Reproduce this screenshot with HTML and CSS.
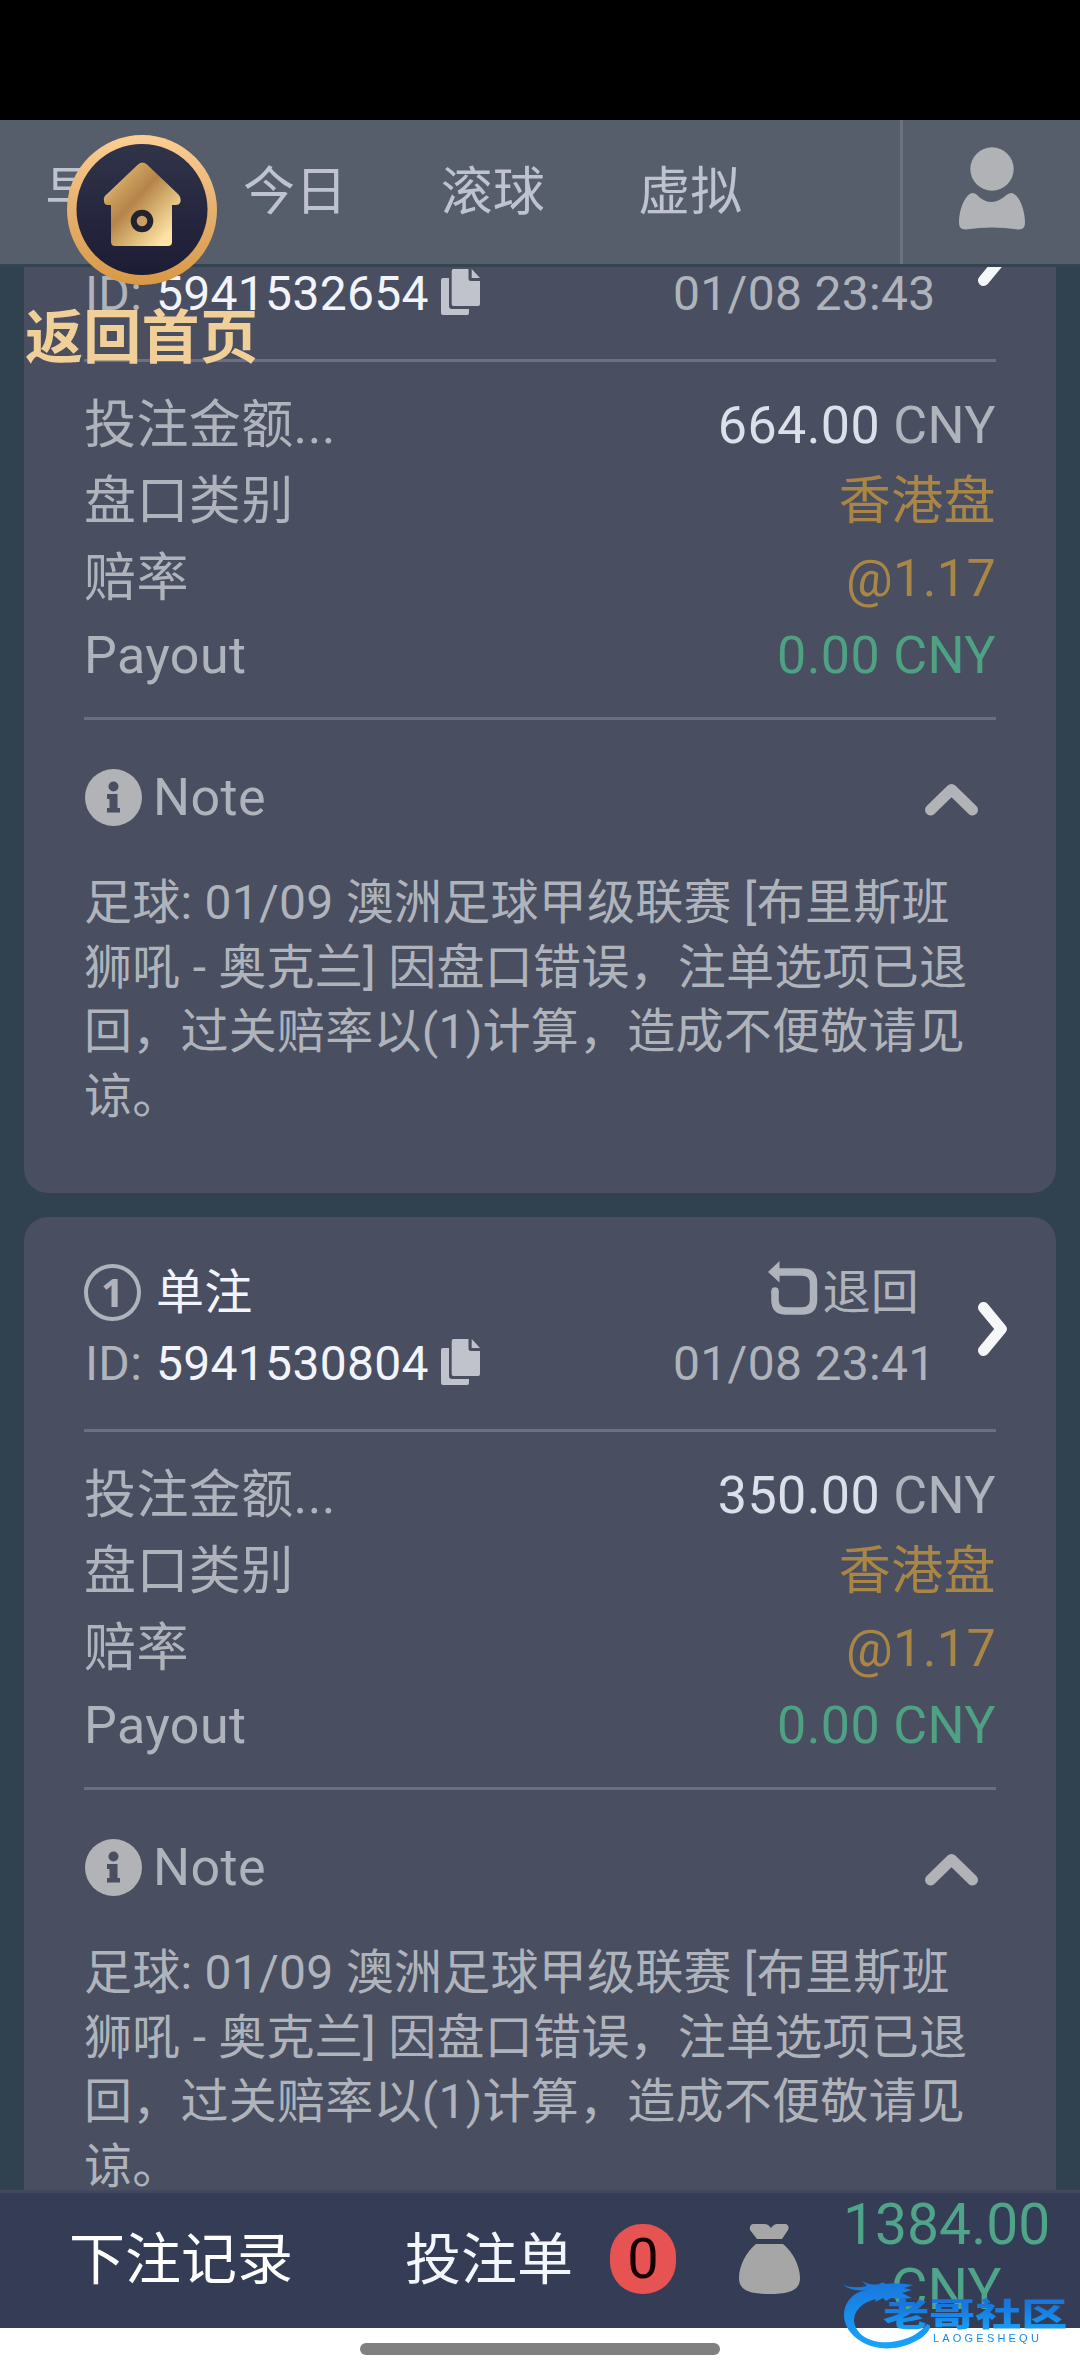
FILE: index.html
```html
<!DOCTYPE html>
<html lang="zh-CN">
<head>
<meta charset="utf-8">
<title>下注记录</title>
<link rel="stylesheet" href="styles.css">
</head>
<body>
<svg class="defs" aria-hidden="true">
  <symbol id="copy" viewBox="0 0 39 46">
    <path d="M2 9H8V37Q8 40 11 40H28V44Q28 46 26 46H2Q0 46 0 44V11Q0 9 2 9Z"/>
    <path d="M12.500 0H27.500V9.500Q27.500 12 30 12H39V35Q39 37 37 37H12.500Q10.700 37 10.700 35V2Q10.700 0 12.500 0Z"/>
    <path d="M30.700 0L39 9H30.700Z"/>
  </symbol>
  <symbol id="info" viewBox="0 0 57 57">
    <circle cx="28.500" cy="28.500" r="28.500"/>
    <g class="cut"><circle cx="28.500" cy="17.500" r="5"/><path d="M22 25H32.500V39H35V43.500H22V39H24.500V30H22Z"/></g>
  </symbol>
  <symbol id="up" viewBox="0 0 53 32"><path class="line" d="M5.500 26L26.500 5.500L47.500 26"/></symbol>
  <symbol id="next" viewBox="0 0 29 54"><path class="line" d="M5.500 5.500L23.300 27L5.500 48.500"/></symbol>
  <symbol id="refund" viewBox="0 0 50 54">
    <path d="M0 11L11.500 0V21.500Z"/>
    <path class="stroke" d="M10 11H34Q45.500 11 45.500 22V39Q45.500 50 34 50H18Q7 50 7 39V30"/>
    <circle cx="7" cy="30" r="3.700"/>
  </symbol>
</svg>
<div class="screen">
  <div class="statusbar"></div>
  <header class="topbar">
    <nav class="tabs"><span>早盘</span><span>今日</span><span>滚球</span><span>虚拟</span></nav>
    <div class="profile">
      <svg width="66" height="84" viewBox="0 0 66 84"><circle cx="33" cy="22" r="21.700"/><path d="M13 46Q17 46 20 50Q32 60 45 50Q49 46 53 46C60 48 66 62 66 76Q66 83 59 82.500Q33 78.500 7 82.500Q0 83 0 76C0 62 6 48 13 46Z"/></svg>
    </div>
  </header>

  <main class="list">
    <article class="card first">
      <div class="head">
        <div class="head-left">
          <div class="line-row"><span class="num">1</span><b>单注</b></div>
          <div class="line-row"><span class="id">ID:</span><b>5941532654</b><svg class="copy"><use href="#copy"/></svg></div>
        </div>
        <div class="head-right">
          <div class="line-row status"><svg class="refund"><use href="#refund"/></svg>退回</div>
          <div class="line-row">01/08 23:43</div>
        </div>
        <svg class="next"><use href="#next"/></svg>
      </div>
      <dl class="rows">
        <div><dt>投注金额...</dt><dd><em>664.00</em> CNY</dd></div>
        <div><dt>盘口类别</dt><dd class="gold">香港盘</dd></div>
        <div><dt>赔率</dt><dd class="gold">@1.17</dd></div>
        <div><dt>Payout</dt><dd class="green">0.00 CNY</dd></div>
      </dl>
      <div class="note-head"><svg class="info"><use href="#info"/></svg><span>Note</span><svg class="up"><use href="#up"/></svg></div>
      <p class="note">足球: 01/09 澳洲足球甲级联赛 [布里斯班<br>狮吼 - 奥克兰] 因盘口错误，注单选项已退<br>回，过关赔率以(1)计算，造成不便敬请见<br>谅。</p>
    </article>

    <article class="card">
      <div class="head">
        <div class="head-left">
          <div class="line-row"><span class="num">1</span><b>单注</b></div>
          <div class="line-row"><span class="id">ID:</span><b>5941530804</b><svg class="copy"><use href="#copy"/></svg></div>
        </div>
        <div class="head-right">
          <div class="line-row status"><svg class="refund"><use href="#refund"/></svg>退回</div>
          <div class="line-row">01/08 23:41</div>
        </div>
        <svg class="next"><use href="#next"/></svg>
      </div>
      <dl class="rows">
        <div><dt>投注金额...</dt><dd><em>350.00</em> CNY</dd></div>
        <div><dt>盘口类别</dt><dd class="gold">香港盘</dd></div>
        <div><dt>赔率</dt><dd class="gold">@1.17</dd></div>
        <div><dt>Payout</dt><dd class="green">0.00 CNY</dd></div>
      </dl>
      <div class="note-head"><svg class="info"><use href="#info"/></svg><span>Note</span><svg class="up"><use href="#up"/></svg></div>
      <p class="note">足球: 01/09 澳洲足球甲级联赛 [布里斯班<br>狮吼 - 奥克兰] 因盘口错误，注单选项已退<br>回，过关赔率以(1)计算，造成不便敬请见<br>谅。</p>
    </article>
  </main>

  <footer class="betbar">
    <span class="records">下注记录</span>
    <span class="slip">投注单</span>
    <span class="badge">0</span>
    <svg class="bag" width="61" height="70" viewBox="0 0 61 70"><path d="M14 0H26Q29 0 32 4Q35 0 38 0H47Q51 2 49 6L43 15H18L11 6Q10 1 14 0ZM17 20H44C53 27 61 41 61 54C61 65 53 70 30.500 70C8 70 0 65 0 54C0 41 8 27 17 20Z"/></svg>
    <span class="balance">1384.00<br>CNY</span>
  </footer>
  <div class="gesture"><i></i></div>

  <a class="home">
    <svg width="150" height="150" viewBox="0 0 150 150">
      <defs>
        <linearGradient id="ring" x1="0" y1="0" x2="0" y2="1"><stop offset="0" stop-color="#fdce93"/><stop offset=".5" stop-color="#e5b070"/><stop offset="1" stop-color="#d99845"/></linearGradient>
        <linearGradient id="disc" x1="0" y1="0" x2="0" y2="1"><stop offset="0" stop-color="#303449"/><stop offset="1" stop-color="#1d1c35"/></linearGradient>
        <linearGradient id="gold" x1="0" y1="0" x2="1" y2="1"><stop offset=".1" stop-color="#e8c98a"/><stop offset=".27" stop-color="#c99d5c"/><stop offset=".43" stop-color="#b5834b"/><stop offset=".58" stop-color="#d0a968"/><stop offset=".85" stop-color="#fde3a5"/></linearGradient>
      </defs>
      <circle cx="75" cy="75" r="75" fill="url(#ring)"/>
      <circle cx="75" cy="74.500" r="65.500" fill="url(#disc)"/>
      <path d="M71 29.500Q75.500 25.500 80 29.500L111 59Q115 63 113 68Q112 70 109 70H105V107Q105 111 101 111H48Q44 111 44 107V70H41Q37 70 37 66Q36 62 40 59Z" fill="url(#gold)"/>
      <circle cx="75" cy="86" r="8.300" fill="#c99d64" stroke="#23222f" stroke-width="6"/>
    </svg>
    <span>返回首页</span>
  </a>

  <div class="watermark">
    <svg width="90" height="72" viewBox="0 0 90 72"><defs><linearGradient id="blue" x1="0" y1="0" x2="0" y2="1"><stop offset="0" stop-color="#1976dc"/><stop offset="1" stop-color="#17a5fb"/></linearGradient></defs><path fill="url(#blue)" d="M1 5Q12 9 25 6Q22 3 20 1Q29 6 37 4Q41 1 44 4Q54 2 71 5Q66 7 62 8L70 10L60 13L70 18Q60 19 49 18L44 21L41 18L33 22L34 19C18 23 12 32 12 41C14 56 30 64 49 62C67 60 78 53 85 44Q90 45 87 50Q83 57 72 62C57 70 35 71 20 62C2 52-3 33 7 20Q14 11 25 10Q10 12 1 5Z"/></svg>
    <b>老哥社区</b>
    <small>LAOGESHEQU</small>
  </div>
</div>
</body>
</html>
```
FILE: styles.css
```css
* { box-sizing: border-box; }
body { margin: 0; background: #000; font-family: Roboto, "Noto Sans CJK SC", sans-serif; color: #afb3bb; }
svg { flex: none; fill: currentColor; }
.defs { position: absolute; width: 0; height: 0; }
.line { fill: none; stroke: currentColor; stroke-width: 11; stroke-linecap: round; stroke-linejoin: round; }
.stroke { fill: none; stroke: currentColor; stroke-width: 7.500; }
.cut { fill: #494e60; }

.screen { position: relative; width: 1080px; height: 2376px; display: flex; flex-direction: column; overflow: hidden; background: #30414f; }
.statusbar { flex: none; height: 120px; background: #000; }
.topbar { flex: none; height: 147px; display: flex; background: #565d6b; border-bottom: 3px solid #344450; }
.tabs { width: 900px; display: flex; align-items: center; gap: 93.600px; padding: 2px 0 0 45.500px; font-size: 52px; line-height: 76px; color: #bfc3cf; white-space: nowrap; }
.profile { flex: 1; border-left: 3px solid #6c7280; padding: 27px 0 0 56px; color: #b1b2b6; }

.list { flex: none; height: 1923px; overflow: hidden; padding: 0 24px; display: flex; flex-direction: column; gap: 24px; }
.card { flex: none; height: 1046px; background: #494e60; border-radius: 24px; padding: 0 60px; }
.first { margin-top: -120px; }

.head { height: 215px; padding: 41px 0 30px; display: flex; border-bottom: 3px solid #6c7080; font-size: 48px; letter-spacing: .3px; }
.head-left { flex: 1; }
.head-right { width: 263px; }
.line-row { height: 70px; line-height: 70px; display: flex; align-items: center; white-space: nowrap; }
.line-row + .line-row { margin-top: 1px; }
.line-row b { font-weight: 400; color: #f2f4fc; }
.num { width: 57px; height: 57px; margin: -2px 15px 0 0; border: 4px solid #afb3bb; border-radius: 50%; font: 700 40px/47px "Open Sans", sans-serif; text-align: center; }
.id { width: 72px; padding-left: 1px; }
.copy { width: 39px; height: 46px; margin: -4px 0 0 12px; color: #c1c3cc; }
.status { justify-content: flex-end; padding-right: 17px; gap: 4px; }
.refund { width: 50px; height: 54px; margin-top: -11px; }
.next { width: 29px; height: 54px; margin: 44px -11px 0 42px; color: #f5f6f7; }

.rows { margin: 0; padding: 25.500px 0 0; height: 358px; border-bottom: 3px solid #6b6f85; font-size: 52px; letter-spacing: .4px; }
.rows div { display: flex; justify-content: space-between; height: 76.700px; line-height: 76.700px; }
.rows dd { margin: 0; }
.rows em { font-style: normal; color: #dce0ea; }
.rows .gold { color: #a98645; }
.rows .green { color: #4fa184; }

.note-head { height: 151px; padding: 4px 18px 0 1px; display: flex; align-items: center; font-size: 52px; letter-spacing: .4px; }
.info { width: 57px; height: 57px; color: #b1b3b6; }
.note-head span { flex: 1; padding-left: 11px; }
.up { width: 53px; height: 32px; margin-top: 4px; color: #b1b3b6; }
.note { margin: 0; font-size: 48px; line-height: 64.700px; letter-spacing: .25px; white-space: nowrap; }

.betbar { flex: none; height: 138px; display: flex; align-items: center; padding-bottom: 3px; background: #353d56; border-top: 3px solid #424860; font-size: 56px; color: #f3f6fd; white-space: nowrap; }
.records { width: 336px; padding: 0 0 10px 69px; color: #fff; }
.slip { width: 205px; padding-bottom: 10px; margin-left: 69px; }
.badge { width: 66px; height: 70px; border-radius: 32px; background: #e65352; color: #150000; line-height: 70px; text-align: center; }
.bag { margin-left: 63px; color: #a6a6a6; }
.balance { width: 206px; margin-left: 43px; padding-bottom: 5px; font-size: 57px; line-height: 65px; letter-spacing: 0; text-align: center; color: #4fa489; }
.gesture { flex: none; height: 48px; padding-top: 15px; background: #fff; }
.gesture i { display: block; width: 360px; height: 12px; margin: 0 auto; border-radius: 6px; background: #808080; }

.home { position: absolute; left: 25px; top: 135px; width: 234px; display: flex; flex-direction: column; }
.home svg { margin-left: 42px; }
.home span { margin-top: 18px; font-size: 58px; line-height: 70px; letter-spacing: .3px; font-weight: 700; color: #f0cf98; white-space: nowrap; }
.watermark { position: absolute; left: 842px; top: 2280px; width: 230px; height: 72px; color: #188bea; filter: blur(.6px); }
.watermark b { position: absolute; left: 41px; top: 17px; font-size: 32px; line-height: 36px; font-weight: 900; transform: scaleX(1.440); transform-origin: 0 0; white-space: nowrap; background: linear-gradient(#1976dc 25%, #17a5fb); background-clip: text; color: transparent; }
.watermark small { position: absolute; left: 91px; top: 53px; font: 400 11px/11px "Liberation Sans", sans-serif; letter-spacing: 3.200px; }
```
